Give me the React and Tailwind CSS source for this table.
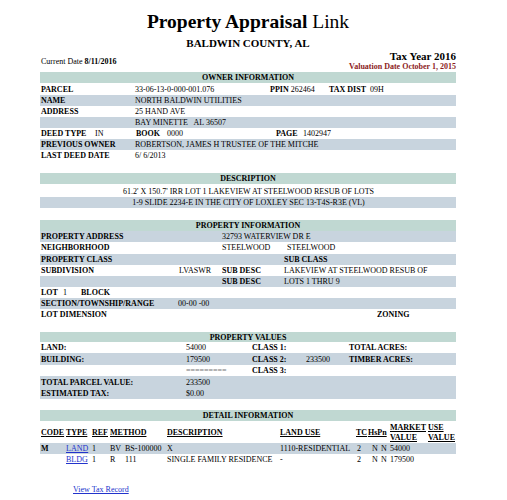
import React from 'react';

// Property record card — a plain, table-like report page
const HEAD_BG = 'bg-[#c0d8d2]';

function Head({ children, className = '', h = 'h-[11px]' }) {
    return (
        <div className={`${h} ${HEAD_BG} text-center font-bold leading-[11px] ${className}`}>{children}</div>
    );
}

function Row({ alt, children, className = '', h = 'h-[11.15px]' }) {
    return (
        <div className={`flex items-center pl-px whitespace-pre ${h} ${alt ? 'bg-[#c8d4de]' : 'bg-white'} ${className}`}>
            {children}
        </div>
    );
}

export default function App() {
    return (
        <div className="w-[507px] h-[500px] bg-white text-black text-[8px] leading-[11px] overflow-hidden" style={{ fontFamily: '"Liberation Serif", "Times New Roman", serif' }}>
            <div className="ml-[40px] w-[416px]">
                {/* title */}
                <div className="pt-[12px] text-center text-[19.5px] leading-[20px]">
                    <span className="font-bold">Property Appraisal</span> Link
                </div>
                <div className="mt-[5px] text-center text-[11px] leading-[12px] font-bold">BALDWIN COUNTY, AL</div>

                <div className="mt-[2px] flex justify-between">
                    <div className="mt-[6px] pl-px leading-[9px]">Current Date <span className="font-bold">8/11/2016</span></div>
                    <div className="text-right">
                        <div className="text-[11px] leading-[11px] font-bold">Tax Year 2016</div>
                        <div className="leading-[9px] font-bold text-[#8c1c1c]">Valuation Date October 1, 2015</div>
                    </div>
                </div>

                {/* owner */}
                <Head className="mt-[0.5px]">OWNER INFORMATION</Head>
                <div className="mt-px">
                    <Row>
                        <span className="w-[94px] font-bold">PARCEL</span>
                        <span className="w-[135px]">33-06-13-0-000-001.076</span>
                        <span className="w-[59px]"><span className="font-bold">PPIN</span> 262464</span>
                        <span><span className="font-bold">TAX DIST</span>  09H</span>
                    </Row>
                    <Row alt>
                        <span className="w-[94px] font-bold">NAME</span>
                        <span>NORTH BALDWIN UTILITIES</span>
                    </Row>
                    <Row>
                        <span className="w-[94px] font-bold">ADDRESS</span>
                        <span>25 HAND AVE</span>
                    </Row>
                    <Row alt>
                        <span className="w-[94px]" />
                        <span>BAY MINETTE   AL 36507</span>
                    </Row>
                    <Row>
                        <span className="w-[54px] font-bold">DEED TYPE</span>
                        <span className="w-[41px]">IN</span>
                        <span className="w-[31px] font-bold">BOOK</span>
                        <span className="w-[109px]">0000</span>
                        <span className="w-[27px] font-bold">PAGE</span>
                        <span>1402947</span>
                    </Row>
                    <Row alt>
                        <span className="w-[94px] font-bold">PREVIOUS OWNER</span>
                        <span>ROBERTSON, JAMES H TRUSTEE OF THE MITCHE</span>
                    </Row>
                    <Row>
                        <span className="w-[94px] font-bold">LAST DEED DATE</span>
                        <span>6/ 6/2013</span>
                    </Row>
                </div>

                {/* description */}
                <Head className="mt-[12px]">DESCRIPTION</Head>
                <div className="mt-px text-center">
                    <Row className="justify-center">61.2' X 150.7' IRR LOT 1 LAKEVIEW AT STEELWOOD RESUB OF LOTS</Row>
                    <Row alt className="justify-center">1-9 SLIDE 2234-E IN THE CITY OF LOXLEY SEC 13-T4S-R3E (VL)</Row>
                </div>

                {/* property information */}
                <Head className="mt-[12px]">PROPERTY INFORMATION</Head>
                <div className="mt-[0.5px]">
                    <Row alt>
                        <span className="w-[181px] font-bold">PROPERTY ADDRESS</span>
                        <span>32793 WATERVIEW DR E</span>
                    </Row>
                    <Row>
                        <span className="w-[181px] font-bold">NEIGHBORHOOD</span>
                        <span className="w-[65px]">STEELWOOD</span>
                        <span>STEELWOOD</span>
                    </Row>
                    <Row alt>
                        <span className="w-[243px] font-bold">PROPERTY CLASS</span>
                        <span className="font-bold">SUB CLASS</span>
                    </Row>
                    <Row>
                        <span className="w-[138px] font-bold">SUBDIVISION</span>
                        <span className="w-[43px]">LVASWR</span>
                        <span className="w-[62px] font-bold">SUB DESC</span>
                        <span>LAKEVIEW AT STEELWOOD RESUB OF</span>
                    </Row>
                    <Row alt>
                        <span className="w-[181px]" />
                        <span className="w-[62px] font-bold">SUB DESC</span>
                        <span>LOTS 1 THRU 9</span>
                    </Row>
                    <Row>
                        <span className="w-[22px] font-bold">LOT</span>
                        <span className="w-[18px]">1</span>
                        <span className="font-bold">BLOCK</span>
                    </Row>
                    <Row alt>
                        <span className="w-[137px] font-bold">SECTION/TOWNSHIP/RANGE</span>
                        <span>00-00 -00</span>
                    </Row>
                    <Row>
                        <span className="w-[336px] font-bold">LOT DIMENSION</span>
                        <span className="font-bold">ZONING</span>
                    </Row>
                </div>

                {/* values */}
                <Head className="mt-[11.5px] leading-[10px]" h="h-[10px]">PROPERTY VALUES</Head>
                <div>
                    <Row h="h-[11.5px]">
                        <span className="w-[145px] font-bold">LAND:</span>
                        <span className="w-[66px]">54000</span>
                        <span className="w-[54px] font-bold">CLASS 1:</span>
                        <span className="w-[43px]" />
                        <span className="font-bold">TOTAL ACRES:</span>
                    </Row>
                    <Row alt h="h-[11.5px]">
                        <span className="w-[145px] font-bold">BUILDING:</span>
                        <span className="w-[66px]">179500</span>
                        <span className="w-[54px] font-bold">CLASS 2:</span>
                        <span className="w-[43px]">233500</span>
                        <span className="font-bold">TIMBER ACRES:</span>
                    </Row>
                    <Row h="h-[11.5px]">
                        <span className="w-[145px]" />
                        <span className="w-[66px] text-[#777]">=========</span>
                        <span className="w-[54px] font-bold">CLASS 3:</span>
                    </Row>
                    <Row alt h="h-[11.5px]">
                        <span className="w-[145px] font-bold">TOTAL PARCEL VALUE:</span>
                        <span>233500</span>
                    </Row>
                    <Row alt h="h-[11.5px]">
                        <span className="w-[145px] font-bold">ESTIMATED TAX:</span>
                        <span>$0.00</span>
                    </Row>
                </div>

                {/* detail */}
                <Head className="mt-[11px]">DETAIL INFORMATION</Head>
                <div className="mt-px grid h-[21px] grid-cols-[25px_26px_18px_57px_113px_76px_12px_22px_38px_29px] items-center font-bold underline leading-[10px]">
                    <span className="pl-px">CODE</span>
                    <span className="pl-px">TYPE</span>
                    <span className="pl-px">REF</span>
                    <span className="pl-px">METHOD</span>
                    <span className="pl-px">DESCRIPTION</span>
                    <span className="pl-px">LAND USE</span>
                    <span className="pl-px">TC</span>
                    <span className="pl-px">HsPn</span>
                    <span className="pl-px">MARKET<br />VALUE</span>
                    <span className="pl-px">USE<br />VALUE</span>
                </div>
                <div className="grid h-[11px] grid-cols-[25px_26px_18px_57px_113px_76px_12px_22px_38px_29px] items-center bg-[#c8d4de] whitespace-pre">
                    <span className="pl-px font-bold">M</span>
                    <span className="pl-px"><span className="text-[#2233cc] underline">LAND</span> </span>
                    <span className="pl-px">1</span>
                    <span className="flex pl-px"><span className="w-[15px]">BV</span><span>BS-100000</span></span>
                    <span className="pl-px">X</span>
                    <span className="pl-px">1110-RESIDENTIAL</span>
                    <span className="pl-[2px]">2</span>
                    <span className="flex pl-[5px]"><span className="w-[9px]">N</span><span>N</span></span>
                    <span className="pl-px">54000</span>
                    <span />
                </div>
                <div className="grid h-[11px] grid-cols-[25px_26px_18px_57px_113px_76px_12px_22px_38px_29px] items-center whitespace-pre">
                    <span />
                    <span className="pl-px"><span className="text-[#2233cc] underline">BLDG</span></span>
                    <span className="pl-px">1</span>
                    <span className="flex pl-px"><span className="w-[15px]">R</span><span>111</span></span>
                    <span className="pl-px">SINGLE FAMILY RESIDENCE</span>
                    <span className="pl-px">-</span>
                    <span className="pl-[2px]">2</span>
                    <span className="flex pl-[5px]"><span className="w-[9px]">N</span><span>N</span></span>
                    <span className="pl-px">179500</span>
                    <span />
                </div>

                <div className="mt-[20px] pl-[33px] leading-[10px]">
                    <a className="text-[#2233cc] underline">View Tax Record</a>
                </div>
            </div>
        </div>
    );
}
